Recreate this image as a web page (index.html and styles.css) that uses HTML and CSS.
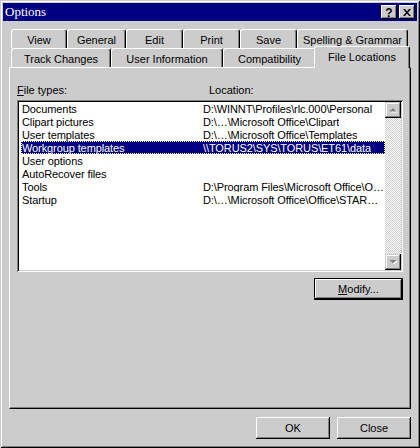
FILE: index.html
```html
<!doctype html>
<html>
<head>
<meta charset="utf-8">
<title>Options</title>
<link rel="stylesheet" href="styles.css">
</head>
<body>
<div class="dialog">
	<div class="titlebar">
		<span class="title">Options</span>
		<span class="caption-btns">
			<span class="cbtn help">?</span>
			<span class="cbtn">
				<svg width="8" height="7" viewBox="0 0 8 7"><path d="M0 0h2l2 2.5L6 0h2L5 3.5 8 7H6L4 4.5 2 7H0l3-3.5z" fill="#000"/></svg>
			</span>
		</span>
	</div>
	<div class="client">
		<div class="tabs">
			<div class="tabrow back">
				<div class="tab">View</div>
				<div class="tab">General</div>
				<div class="tab">Edit</div>
				<div class="tab">Print</div>
				<div class="tab">Save</div>
				<div class="tab">Spelling &amp; Grammar</div>
			</div>
			<div class="tabrow front">
				<div class="tab">Track Changes</div>
				<div class="tab">User Information</div>
				<div class="tab">Compatibility</div>
				<div class="tab cur">File Locations</div>
			</div>
		</div>
		<div class="panel">
			<div class="labels">
				<span><u>F</u>ile types:</span>
				<span>Location:</span>
			</div>
			<div class="listbox">
				<ul class="rows">
					<li><span class="name">Documents</span><span class="loc">D:\WINNT\Profiles\rlc.000\Personal</span></li>
					<li><span class="name">Clipart pictures</span><span class="loc">D:\…\Microsoft Office\Clipart</span></li>
					<li><span class="name">User templates</span><span class="loc">D:\…\Microsoft Office\Templates</span></li>
					<li class="sel"><span class="name">Workgroup templates</span><span class="loc">\\TORUS2\SYS\TORUS\ET61\data</span></li>
					<li><span class="name">User options</span><span class="loc"></span></li>
					<li><span class="name">AutoRecover files</span><span class="loc"></span></li>
					<li><span class="name">Tools</span><span class="loc">D:\Program Files\Microsoft Office\O…</span></li>
					<li><span class="name">Startup</span><span class="loc">D:\…\Microsoft Office\Office\STAR…</span></li>
				</ul>
				<div class="scrollbar">
					<div class="sb-btn">
						<svg width="9" height="6" viewBox="0 0 9 6"><path d="M1.5 5.5h7L5 2z" fill="#fff"/><path d="M0.5 4.5h7L4 1z" fill="#808080"/></svg>
					</div>
					<div class="sb-track"></div>
					<div class="sb-btn">
						<svg width="9" height="6" viewBox="0 0 9 6"><path d="M1.5 2h7L5 5.5z" fill="#fff"/><path d="M0.5 1h7L4 4.5z" fill="#808080"/></svg>
					</div>
				</div>
			</div>
			<div class="modify-row">
				<button class="btn default"><u>M</u>odify...</button>
			</div>
		</div>
		<div class="footer">
			<button class="btn">OK</button>
			<button class="btn">Close</button>
		</div>
	</div>
</div>
</body>
</html>
```
FILE: styles.css
```css
*{ margin:0; padding:0; list-style:none; box-sizing:border-box; }
body{ background:#ccc; font-family:"Liberation Sans", Arial, sans-serif; font-size:11px; color:#000; }

.dialog{ width:420px; height:448px; padding:3px; background:#ccc;
	box-shadow:inset 1px 1px #ccc, inset -1px -1px #000, inset 2px 2px #fff, inset -2px -2px #808080; }

.titlebar{ display:flex; align-items:center; justify-content:space-between; height:18px; padding:0 2px; background:#000080; }
.title{ font-family:"Liberation Serif", "Times New Roman", serif; font-size:13px; color:#fff; line-height:18px; }
.caption-btns{ display:flex; gap:2px; }
.cbtn{ display:flex; align-items:center; justify-content:center; width:16px; height:14px; background:#ccc; font-weight:bold; font-size:12px; line-height:14px;
	box-shadow:inset -1px -1px #000, inset 1px 1px #fff, inset -2px -2px #808080; }
.help{ padding-top:1px; }

.client{ padding:8px 6px 0 6px; }

.tabs{ padding-left:2px; }
.tabrow{ display:grid; height:19px; }
.back{ grid-template-columns:56px 59px 57px 57px 57px 111px; }
.front{ grid-template-columns:100px 112px 93px 92px; }
.tab{ background:#ccc; text-align:center; white-space:nowrap; padding-top:2px; line-height:16px;
	border-top:1px solid #fff; border-left:1px solid #fff; border-right:1px solid #000; border-radius:3px 3px 0 0;
	box-shadow:inset -1px 0 #808080; }
.tab.cur{ position:relative; z-index:1; margin:-2px -2px -1px -2px; line-height:17px; }

.panel{ height:342px; padding:16px 7px 0 7px; background:#ccc;
	border-top:1px solid #fff; border-left:1px solid #fff; border-right:1px solid #000; border-bottom:1px solid #000;
	box-shadow:inset -1px -1px #808080; }

.labels{ display:grid; grid-template-columns:192px 1fr; line-height:13px; margin-bottom:3px; }

.listbox{ display:flex; height:172px; padding:2px; background:#fff;
	box-shadow:inset 1px 1px #808080, inset -1px -1px #fff, inset 2px 2px #000, inset -2px -2px #ccc; }
.rows{ flex:1; min-width:0; letter-spacing:-0.1px; }
.rows li{ display:flex; height:13px; margin-left:2px; padding-top:1px; line-height:11px; border:1px solid transparent; white-space:nowrap; }
.rows .name{ width:181px; flex:none; }
.rows .loc{ overflow:hidden; padding-bottom:2px; }
.rows li.sel{ background:#000080; color:#fff; border:1px dotted #ffff80; }

.scrollbar{ display:flex; flex-direction:column; width:16px; }
.sb-btn{ display:flex; align-items:center; justify-content:center; height:16px; background:#ccc;
	box-shadow:inset -1px -1px #000, inset 1px 1px #ccc, inset -2px -2px #808080, inset 2px 2px #fff; }
.sb-track{ flex:1; background-image:repeating-conic-gradient(#ccc 0 25%, #fff 0 50%); background-size:2px 2px; }

.modify-row{ display:flex; justify-content:flex-end; margin-top:6px; }

.btn{ height:22px; width:74px; background:#ccc; border:none; font-family:inherit; font-size:11px; color:#000;
	box-shadow:inset -1px -1px #000, inset 1px 1px #fff, inset -2px -2px #808080; }
.btn.default{ width:89px; border:1px solid #000; }

.footer{ display:flex; justify-content:flex-end; gap:7px; margin-top:8px; }
```
